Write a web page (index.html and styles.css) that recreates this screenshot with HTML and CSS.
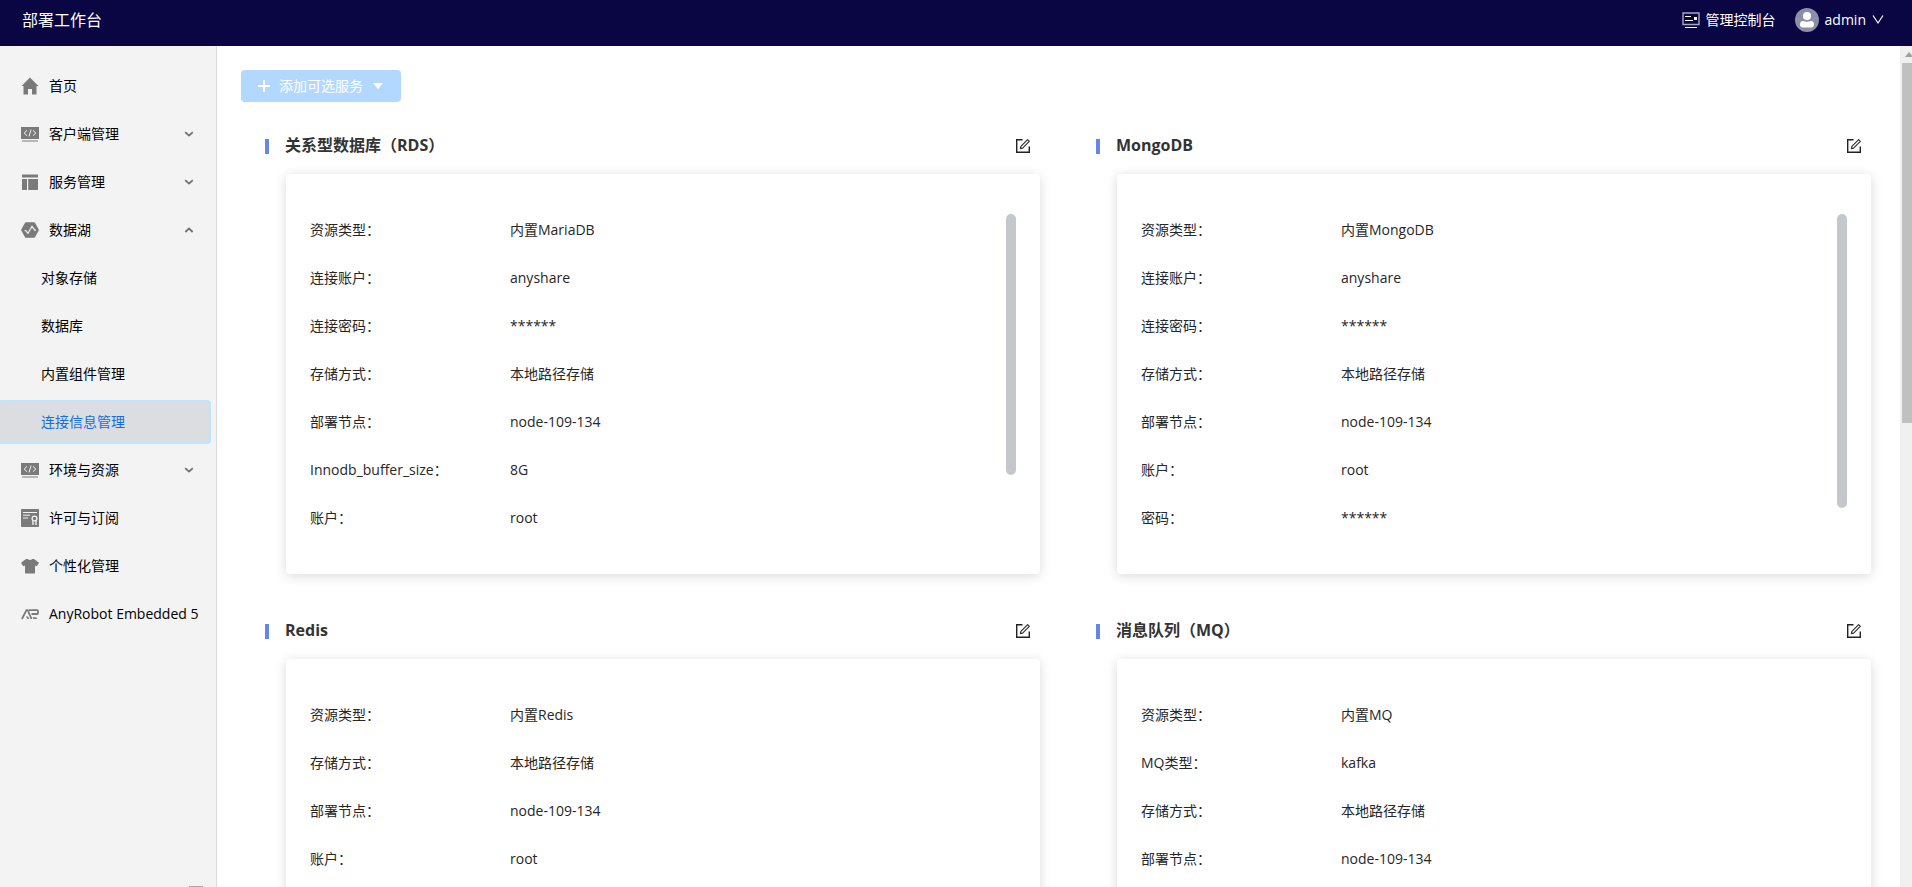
FILE: index.html
```html
<!DOCTYPE html>
<html lang="zh-CN">
<head>
<meta charset="utf-8">
<title>部署工作台</title>
<link rel="stylesheet" href="styles.css">
</head>
<body>
<svg class="defs" aria-hidden="true">
  <symbol id="i-edit" viewBox="0 0 16 16"><path d="M7.5 1.7H1.7v12.6h12.6V8.5" fill="none" stroke="#222" stroke-width="1.4"/><path d="M5.4 10.6l.5-2.2 6.7-6.7 1.7 1.7-6.7 6.7z" fill="none" stroke="#333" stroke-width="1.2" stroke-linejoin="round"/></symbol>
  <symbol id="i-code" viewBox="0 0 18 18"><path fill="#7a7a7a" d="M0 2h18v12H0zM1 15.5h16v1H1z"/><path d="M6 5.4L3.2 8 6 10.6M12 5.4L14.8 8 12 10.6M10 4.6L8 11.4" fill="none" stroke="#f3f3f3" stroke-width="1"/></symbol>
  <symbol id="i-down" viewBox="0 0 10 10"><path d="M1.2 3.2L5 6.6l3.8-3.4" fill="none" stroke="#6e6e6e" stroke-width="1.8"/></symbol>
  <symbol id="i-up" viewBox="0 0 10 10"><path d="M1.4 7L5 3.4 8.6 7" fill="none" stroke="#6e6e6e" stroke-width="1.8"/></symbol>
</svg>

<header class="topbar">
  <h1 class="brand">部署工作台</h1>
  <a class="console" href="#">
    <svg width="18" height="18" viewBox="0 0 18 18"><path d="M1 2h16v11.500H1z" fill="none" stroke="#a9a8bf" stroke-width="1.400"/><path d="M3 5.500h6M3 9.500h8M3 16.500h12" stroke="#fff" stroke-width="1"/><path fill="#fff" d="M12 6h3v3h-3z"/></svg>
    <span>管理控制台</span>
  </a>
  <button class="user" type="button">
    <svg width="24" height="24" viewBox="0 0 24 24"><circle cx="12" cy="12" r="12" fill="#8b90a7"/><circle cx="12" cy="8" r="4" fill="#fff"/><path fill="#fff" d="M5 16.500c0-2 1-3.500 3-3.500 2.500 1 5.500 1 8 0 2 0 3 1.500 3 3.500 0 2-1 3-3 3H8c-2 0-3-1-3-3z"/></svg>
    <span>admin</span>
    <svg width="12" height="12" viewBox="0 0 12 12"><path d="M1 1.500l5 7.500 5-7.500" fill="none" stroke="#fff" stroke-width="1.200"/></svg>
  </button>
</header>

<div class="body">
  <nav class="sidebar">
    <ul class="menu">
      <li><a class="item" href="#"><svg class="ico" viewBox="0 0 18 18"><path fill="#7a7a7a" d="M9 .5l8.500 8.500h-2v8.500h-4.500v-5.500H7v5.500H2.500V9h-2z"/></svg><span>首页</span></a></li>
      <li><a class="item" href="#"><svg class="ico"><use href="#i-code"/></svg><span>客户端管理</span><svg class="arrow"><use href="#i-down"/></svg></a></li>
      <li><a class="item" href="#"><svg class="ico" viewBox="0 0 18 18"><path fill="#7a7a7a" d="M1 1.500h16v3H1zM1 6h5v11H1zM7.200 6H17v11H7.200z"/></svg><span>服务管理</span><svg class="arrow"><use href="#i-down"/></svg></a></li>
      <li><a class="item" href="#"><svg class="ico" viewBox="0 0 18 18"><path fill="#7a7a7a" d="M5 1.200h8q.6 0 1 .6L18 9l-4 7.200q-.4.600-1 .600H5q-.6 0-1-.6L0 9l4-7.200q.4-.6 1-.6z"/><path d="M3.500 9.500h1.200l2.300 2.800 4-7 2.800 3.900H15" fill="none" stroke="#f3f3f3" stroke-width="1.200"/></svg><span>数据湖</span><svg class="arrow"><use href="#i-up"/></svg></a></li>
      <li><a class="item sub" href="#">对象存储</a></li>
      <li><a class="item sub" href="#">数据库</a></li>
      <li><a class="item sub" href="#">内置组件管理</a></li>
      <li><a class="item sub active" href="#">连接信息管理</a></li>
      <li><a class="item" href="#"><svg class="ico"><use href="#i-code"/></svg><span>环境与资源</span><svg class="arrow"><use href="#i-down"/></svg></a></li>
      <li><a class="item" href="#"><svg class="ico" viewBox="0 0 18 18"><rect width="18" height="18" rx="1" fill="#7a7a7a"/><path d="M2 3.500h14M2 6.200h7M2 9h5" stroke="#f3f3f3" stroke-width="1"/><circle cx="13.500" cy="9.500" r="2.400" fill="none" stroke="#f3f3f3" stroke-width="1.300"/><path d="M12 11.500V16M15 11.500V16" stroke="#f3f3f3" stroke-width="1.400"/></svg><span>许可与订阅</span></a></li>
      <li><a class="item" href="#"><svg class="ico" viewBox="0 0 18 18"><path fill="#7a7a7a" d="M5 2h1.700q2.300 2 4.600 0H13l5 3.800-2.200 3.400-1.800-.8V16q0 .5-.5.500h-9Q4 16.500 4 16V8.400l-1.800.8L0 5.800z"/></svg><span>个性化管理</span></a></li>
      <li><a class="item" href="#"><svg class="ico" viewBox="0 0 18 18"><g fill="none" stroke="#7a7a7a" stroke-width="1.800"><path d="M.9 14L5.500 5.200h1.200L10.500 14"/><path d="M8 5.200h8q1 0 1 1v1.800q0 1-1 1h-5.500"/></g><path fill="#7a7a7a" d="M5 11.500h2l1.300 2.500H6.400zM11.500 12.300h3.500l1.500 1.700h-4z"/></svg><span>AnyRobot Embedded 5</span></a></li>
    </ul>
    <div class="collapse"></div>
  </nav>

  <main class="content">
    <button class="add" type="button">
      <svg width="14" height="14" viewBox="0 0 14 14"><path d="M7 1v12M1 7h12" stroke="#fff" stroke-width="1.800"/></svg>
      <span>添加可选服务</span>
      <svg width="14" height="14" viewBox="0 0 14 14"><path fill="#fff" d="M2 4h10L7 10z"/></svg>
    </button>

    <div class="grid">
      <section>
        <div class="head"><h2>关系型数据库（RDS）</h2><button class="edit" type="button" aria-label="编辑"><svg><use href="#i-edit"/></svg></button></div>
        <div class="card">
          <dl>
            <dt>资源类型：</dt><dd>内置MariaDB</dd>
            <dt>连接账户：</dt><dd>anyshare</dd>
            <dt>连接密码：</dt><dd>******</dd>
            <dt>存储方式：</dt><dd>本地路径存储</dd>
            <dt>部署节点：</dt><dd>node-109-134</dd>
            <dt>Innodb_buffer_size：</dt><dd>8G</dd>
            <dt>账户：</dt><dd>root</dd>
          </dl>
          <div class="thumb thumb-short"></div>
        </div>
      </section>
      <section>
        <div class="head"><h2>MongoDB</h2><button class="edit" type="button" aria-label="编辑"><svg><use href="#i-edit"/></svg></button></div>
        <div class="card">
          <dl>
            <dt>资源类型：</dt><dd>内置MongoDB</dd>
            <dt>连接账户：</dt><dd>anyshare</dd>
            <dt>连接密码：</dt><dd>******</dd>
            <dt>存储方式：</dt><dd>本地路径存储</dd>
            <dt>部署节点：</dt><dd>node-109-134</dd>
            <dt>账户：</dt><dd>root</dd>
            <dt>密码：</dt><dd>******</dd>
          </dl>
          <div class="thumb thumb-long"></div>
        </div>
      </section>
      <section>
        <div class="head"><h2>Redis</h2><button class="edit" type="button" aria-label="编辑"><svg><use href="#i-edit"/></svg></button></div>
        <div class="card">
          <dl>
            <dt>资源类型：</dt><dd>内置Redis</dd>
            <dt>存储方式：</dt><dd>本地路径存储</dd>
            <dt>部署节点：</dt><dd>node-109-134</dd>
            <dt>账户：</dt><dd>root</dd>
          </dl>
        </div>
      </section>
      <section>
        <div class="head"><h2>消息队列（MQ）</h2><button class="edit" type="button" aria-label="编辑"><svg><use href="#i-edit"/></svg></button></div>
        <div class="card">
          <dl>
            <dt>资源类型：</dt><dd>内置MQ</dd>
            <dt>MQ类型：</dt><dd>kafka</dd>
            <dt>存储方式：</dt><dd>本地路径存储</dd>
            <dt>部署节点：</dt><dd>node-109-134</dd>
          </dl>
        </div>
      </section>
    </div>
  </main>

  <div class="scrollbar">
    <svg width="10" height="17" viewBox="0 0 10 17"><path fill="#a0a0a0" d="M3 11l4-5 3 3.500V11z"/></svg>
    <div class="scroll-thumb"></div>
  </div>
</div>
</body>
</html>
```

FILE: styles.css
```css
* {
  box-sizing: border-box;
}

body {
  margin: 0;
  height: 100vh;
  display: flex;
  flex-direction: column;
  overflow: hidden;
  background: #fff;
  color: #262626;
  font: 14px/20px "Open Sans", "Noto Sans CJK SC", sans-serif;
}

a {
  color: inherit;
  text-decoration: none;
}

button {
  border: 0;
  padding: 0;
  background: none;
  color: inherit;
  font: inherit;
  cursor: pointer;
}

ul,
dl,
dd,
h1,
h2 {
  margin: 0;
  padding: 0;
}

.defs {
  display: none;
}

.topbar {
  flex: none;
  display: flex;
  align-items: center;
  height: 46px;
  padding: 0 28px 6px 22px;
  background: #0a0644;
  color: #fff;
}

.brand {
  margin-right: auto;
  font-size: 16px;
  font-weight: 400;
}

.console,
.user {
  display: flex;
  align-items: center;
}

.console {
  gap: 6px;
  margin-right: 19px;
}

.user {
  gap: 6px;
}

.body {
  flex: 1;
  min-height: 0;
  display: flex;
}

.sidebar {
  flex: none;
  display: flex;
  flex-direction: column;
  width: 217px;
  padding-top: 16px;
  border-right: 1px solid #d9d9d9;
  background: #f3f3f3;
  color: #000;
}

.menu {
  flex: 1;
  list-style: none;
}

.item {
  display: flex;
  align-items: center;
  height: 40px;
  margin: 4px 7px 8px 0;
  padding: 0 15px 0 21px;
  white-space: nowrap;
}

.sub {
  padding-left: 41px;
}

.active {
  border-radius: 2px;
  background: #dcdde1;
  box-shadow: 0 0 0 2px #bae7ff;
  color: #126ee3;
}

.ico {
  flex: none;
  width: 18px;
  height: 18px;
  margin-right: 10px;
}

.arrow {
  width: 10px;
  height: 10px;
  margin-left: auto;
}

.collapse {
  width: 14px;
  height: 1px;
  margin-left: 189px;
  background: #a6a6a6;
}

.content {
  flex: 1;
  min-width: 0;
  overflow: hidden;
  padding: 24px 29px 0 24px;
}

.add {
  display: flex;
  align-items: center;
  gap: 8px;
  height: 32px;
  padding: 0 16px;
  border-radius: 4px;
  background: #b3d8ff;
  color: #fff;
}

.grid {
  display: grid;
  grid-template-columns: 1fr 1fr;
  gap: 41px 56px;
  margin: 28px 0 0 24px;
}

.head {
  display: flex;
  align-items: center;
  height: 32px;
  margin-bottom: 12px;
  padding-right: 9px;
}

.head::before {
  content: "";
  width: 4px;
  height: 15px;
  margin-right: 16px;
  background: #6487e8;
}

.head h2 {
  margin-right: auto;
  padding-bottom: 2px;
  color: #333;
  font-size: 16px;
  font-weight: 700;
}

.edit,
.edit svg {
  display: block;
  width: 16px;
  height: 16px;
}

.card {
  display: flex;
  align-items: flex-start;
  height: 400px;
  margin-left: 21px;
  padding: 32px 24px;
  border-radius: 4px;
  box-shadow: 0 2px 12px rgba(0, 0, 0, 0.15);
}

.card dl {
  flex: 1;
  display: grid;
  grid-template-columns: 200px 1fr;
  grid-auto-rows: 48px;
  align-items: center;
}

.thumb {
  width: 10px;
  margin-top: 8px;
  border-radius: 5px;
  background: #c4c8cc;
}

.thumb-short {
  height: 261px;
}

.thumb-long {
  height: 294px;
}

.scrollbar {
  flex: none;
  width: 12px;
  padding-left: 2px;
  background: #f0f0f0;
}

.scrollbar svg {
  display: block;
}

.scroll-thumb {
  height: 360px;
  background: #c0c0c0;
}
```
